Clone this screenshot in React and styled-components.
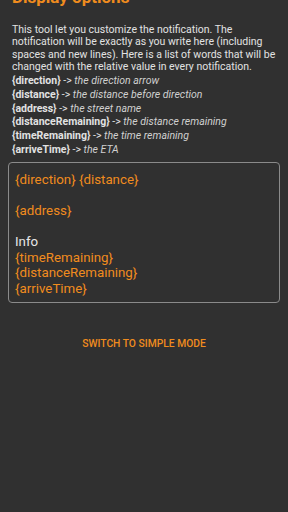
import styled, { createGlobalStyle } from "styled-components";

const GlobalStyle = createGlobalStyle`
  html, body {
    margin: 0;
    padding: 0;
    background: #303030;
    font-family: Roboto, "Noto Sans", sans-serif;
  }
`;

const Page = styled.div`
  width: 288px;
  height: 512px;
  overflow: hidden;
  background: #303030;
  display: flex;
  flex-direction: column;
`;

const Title = styled.h2`
  margin: -13px 0 0 12px;
  font-size: 17px;
  font-weight: 700;
  color: #f08c1e;
  line-height: 20px;
`;

const Description = styled.p`
  margin: 17px 12px 0 12px;
  font-size: 10.5px;
  line-height: 12.3px;
  color: #e2e2e2;
`;

const Legend = styled.ul`
  list-style: none;
  margin: 1px 12px 0 12px;
  padding: 0;
  font-size: 10.5px;
  line-height: 13.7px;
  color: #e2e2e2;

  b {
    font-weight: 700;
  }

  i {
    color: #d0d0d0;
  }
`;

const Editor = styled.div`
  margin: 6px 8px 0 8px;
  height: 141px;
  box-sizing: border-box;
  border: 1px solid #8a8a8a;
  border-radius: 4px;
  padding: 9px 6px;
  font-size: 13.3px;
  line-height: 15.5px;
  color: #e6e6e6;
  white-space: pre-wrap;
`;

const Token = styled.span`
  color: #f08c1e;
`;

const ModeButton = styled.button`
  align-self: center;
  margin-top: 31px;
  background: none;
  border: none;
  font-family: Roboto, "Noto Sans", sans-serif;
  font-size: 10.3px;
  font-weight: 500;
  line-height: 12px;
  color: #f08c1e;
  padding: 4px 8px;
`;

const legend = [
  ["{direction}", "the direction arrow"],
  ["{distance}", "the distance before direction"],
  ["{address}", "the street name"],
  ["{distanceRemaining}", "the distance remaining"],
  ["{timeRemaining}", "the time remaining"],
  ["{arriveTime}", "the ETA"],
];

export default function App() {
  return (
    <Page>
      <GlobalStyle />
      <Title>Display options</Title>
      <Description>
        This tool let you customize the notification. The notification will be
        exactly as you write here (including spaces and new lines). Here is a
        list of words that will be changed with the relative value in every
        notification.
      </Description>
      <Legend>
        {legend.map(([key, text]) => (
          <li key={key}>
            <b>{key}</b> -&gt; <i>{text}</i>
          </li>
        ))}
      </Legend>
      <Editor>
        <Token>{"{direction} {distance}"}</Token>
        {"\n\n"}
        <Token>{"{address}"}</Token>
        {"\n\nInfo\n"}
        <Token>{"{timeRemaining}"}</Token>
        {"\n"}
        <Token>{"{distanceRemaining}"}</Token>
        {"\n"}
        <Token>{"{arriveTime}"}</Token>
      </Editor>
      <ModeButton>SWITCH TO SIMPLE MODE</ModeButton>
    </Page>
  );
}
